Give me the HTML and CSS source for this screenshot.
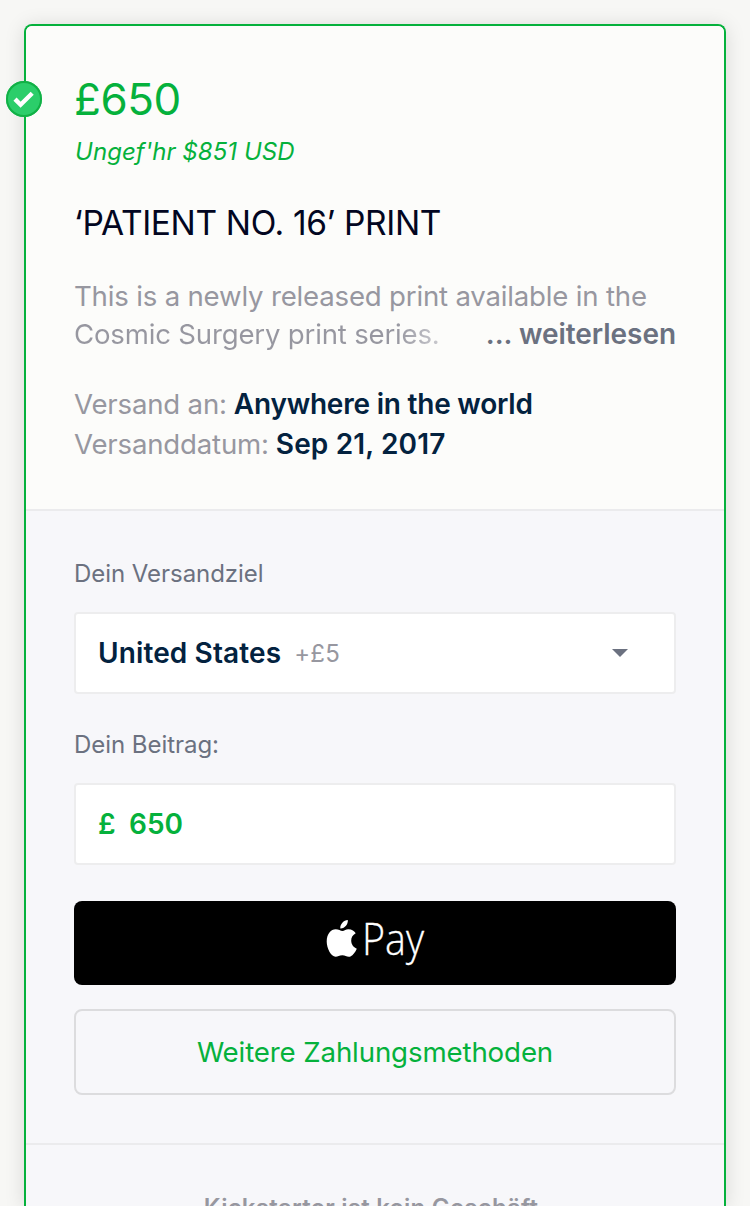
FILE: index.html
```html
<!DOCTYPE html>
<html lang="de">
<head>
<meta charset="utf-8">
<title>Kickstarter</title>
<link rel="stylesheet" href="styles.css">
</head>
<body>
<main class="card">
  <span class="badge">
    <svg width="36" height="36" viewBox="0 0 36 36"><path class="badge-check" d="M9 18.1 14.6 23.7 26.2 12.3"/></svg>
  </span>
  <section class="reward">
    <h1 class="price"><span>£650</span></h1>
    <p class="approx"><span>Ungef'hr $851 USD</span></p>
    <h2 class="title"><span>‘PATIENT NO. 16’ PRINT</span></h2>
    <div class="desc">
      <span class="desc-one">This is a newly released print available in the</span>
      <div class="desc-row"><span class="desc-two">Cosmic Surgery print series.</span><a class="more">... weiterlesen</a></div>
    </div>
    <dl class="facts">
      <div class="fact"><dt>Versand an:</dt><dd class="place">Anywhere in the world</dd></div>
      <div class="fact"><dt>Versanddatum:</dt><dd class="date">Sep 21, 2017</dd></div>
    </dl>
  </section>
  <section class="pledge">
    <div class="label"><span>Dein Versandziel</span></div>
    <div class="field">
      <span class="country">United States</span><span class="extra">+£5</span>
      <svg class="caret" width="16" height="8" viewBox="0 0 16 8"><path d="M0 0H16L8 8Z"/></svg>
    </div>
    <div class="label"><span>Dein Beitrag:</span></div>
    <div class="field amount"><span class="currency">£</span><span class="sum">650</span></div>
    <button class="apple-pay" aria-label="Apple Pay">
      <svg width="110" height="84" viewBox="19 0 110 84">
        <g class="apple">
          <path d="M46.8 19C47.3 23.2 43.6 27.7 39.3 27.4C38.9 23.3 42.8 19.1 46.8 19Z"/>
          <path d="M47.3 28.3C51 28.4 53.4 30.2 54.7 32.2C51.8 33.9 50.2 36.3 50.2 39.6C50.2 43.3 52.3 46.4 55.8 47.7C54.4 51 51 55.8 47.9 55.8C45.3 55.8 44.2 54.3 41.3 54.3C38.2 54.3 37 55.8 34.6 55.8C30.1 55.8 25.7 47.4 25.7 40.6C25.7 32.8 30.1 28.3 34.7 28.3C37.5 28.3 39.6 30 41.5 30C43.2 30 45.3 28.2 47.3 28.3Z"/>
        </g>
        <text class="pay" x="61" y="54" textLength="62" lengthAdjust="spacingAndGlyphs">Pay</text>
      </svg>
    </button>
    <button class="other"><span>Weitere Zahlungsmethoden</span></button>
  </section>
  <footer class="note"><span>Kickstarter ist kein Geschäft.</span></footer>
</main>
</body>
</html>
```
FILE: styles.css
```css
* { box-sizing: border-box; }
html, body { margin: 0; height: 1206px; overflow: hidden; }
body {
  background: #f7f7f5;
  font-family: Inter, "Liberation Sans", sans-serif;
  font-size: 28px;
  padding: 24px 24px 0;
}
h1, h2, p, dl, dd { margin: 0; font-weight: 400; }
span, dt, dd, a { white-space: nowrap; }

.card {
  position: relative;
  height: 1182px;
  border: 2px solid #05b13c;
  border-bottom: 0;
  border-radius: 8px 8px 0 0;
  background: #f7f7fa;
  box-shadow: 0 2px 20px rgba(0, 0, 0, 0.13);
}
.badge {
  position: absolute;
  left: -20px;
  top: 55px;
  width: 36px;
  height: 36px;
  border-radius: 50%;
  background: #2bce6a;
  box-shadow: inset 0 0 0 2px #12b046;
}
.badge svg { display: block; }
.badge-check { fill: none; stroke: #fff; stroke-width: 4.4; }

.reward {
  height: 485px;
  padding: 47px 48px 0;
  background: #fcfcfa;
  border-bottom: 2px solid #ebebed;
  border-radius: 6px 6px 0 0;
}
.price { font-size: 44px; line-height: 52px; letter-spacing: -0.5px; color: #05b13c; }
.approx { margin-top: 9px; padding-left: 1px; font-size: 24px; line-height: 36px; font-style: italic; letter-spacing: 0.07px; color: #05b13c; }
.title { margin-top: 33px; font-size: 33.5px; line-height: 40px; letter-spacing: -0.35px; color: #020621; }
.desc { margin-top: 34px; line-height: 38px; color: #9797a0; }
.desc-one, .desc-two, .fact dt { font-size: 27.6px; letter-spacing: -0.19px; }
.desc-one { display: block; }
.desc-row { display: flex; justify-content: space-between; }
.desc-two {
  background: linear-gradient(90deg, #9797a0 88%, #c9c9ce 100%);
  background-clip: text;
  color: transparent;
}
.more { font-weight: 600; letter-spacing: -0.05px; color: #6b7180; }
.facts { margin-top: 31px; line-height: 40px; }
.fact { display: flex; gap: 7px; }
.fact dt { color: #9797a0; }
.fact dd { font-weight: 600; color: #03223f; }
.fact .place { letter-spacing: -0.22px; }
.fact .date { letter-spacing: 0.15px; }

.pledge {
  height: 634px;
  padding: 48px 48px 0;
  border-bottom: 2px solid #ebebed;
}
.label { font-size: 24px; line-height: 30px; letter-spacing: -0.05px; color: #6b7180; }
.field {
  display: flex;
  align-items: center;
  height: 82px;
  margin: 23px 0 36px;
  padding: 0 46px 0 22px;
  border: 2px solid #ededee;
  border-radius: 4px;
  background: #fff;
  font-weight: 600;
  color: #03223f;
}
.country { letter-spacing: 0.12px; }
.extra { margin-left: 13px; font-size: 24px; font-weight: 400; letter-spacing: 0.3px; color: #9797a0; }
.caret { margin-left: auto; fill: #6b7180; }
.amount { color: #05b13c; }
.currency { width: 31px; }
.apple-pay, .other {
  display: flex;
  align-items: center;
  justify-content: center;
  width: 100%;
  padding: 0;
  border: 0;
  border-radius: 8px;
  font: inherit;
}
.apple-pay { height: 84px; background: #000; }
.apple-pay svg { overflow: visible; }
.apple { fill: #fff; }
.pay { fill: #fff; stroke: #fff; stroke-width: 0.3; font-family: "Open Sans", sans-serif; font-weight: 300; font-size: 45px; }
.other {
  height: 86px;
  margin-top: 24px;
  border: 2px solid #dcdcde;
  background: transparent;
  font-size: 27.7px;
  letter-spacing: -0.15px;
  color: #05b13c;
}
.note {
  height: 61px;
  padding-top: 48px;
  overflow: hidden;
  text-align: center;
  font-size: 24px;
  line-height: 30px;
  font-weight: 600;
  letter-spacing: 0.24px;
  color: #9797a0;
}
```
